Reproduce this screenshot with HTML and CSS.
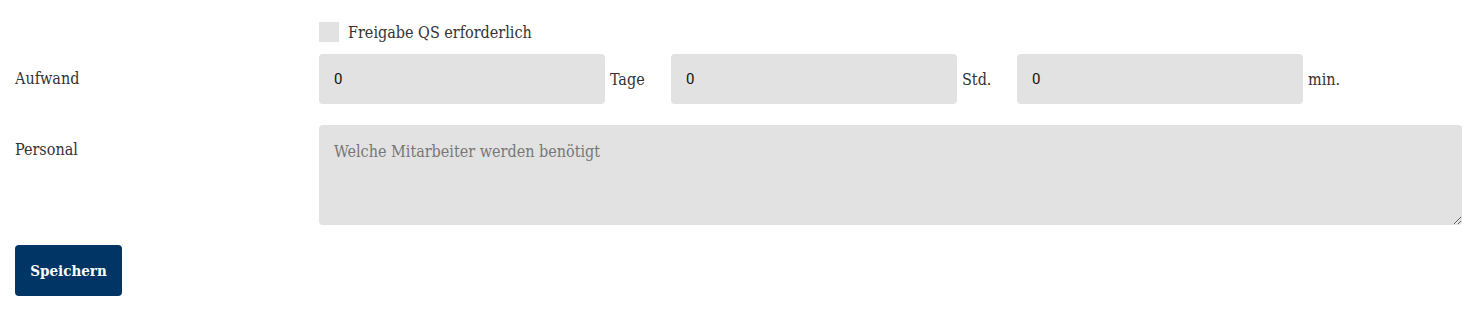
FILE: index.html
```html
<!DOCTYPE html>
<html lang="de">
<head>
<meta charset="utf-8">
<title>Formular</title>
<link rel="stylesheet" href="styles.css">
</head>
<body>
<form class="form">
  <div class="row row-check">
    <div class="spacer"></div>
    <label class="check">
      <span class="box"></span>
      <span class="check-text">Freigabe QS erforderlich</span>
    </label>
  </div>
  <div class="row row-effort">
    <div class="label">Aufwand</div>
    <div class="effort">
      <input class="field" type="text" value="0">
      <span class="unit unit-days">Tage</span>
      <input class="field" type="text" value="0">
      <span class="unit unit-hours">Std.</span>
      <input class="field" type="text" value="0">
      <span class="unit">min.</span>
    </div>
  </div>
  <div class="row row-staff">
    <div class="label">Personal</div>
    <textarea class="area" placeholder="Welche Mitarbeiter werden benötigt"></textarea>
  </div>
  <div class="actions">
    <button type="button" class="btn">Speichern</button>
  </div>
</form>
</body>
</html>
```
FILE: styles.css
```css
html, body {
  margin: 0;
  padding: 0;
  background: #fff;
}
body {
  font-family: "DejaVu Serif Condensed", "DejaVu Serif", "Liberation Serif", serif;
  font-size: 16px;
  color: #333;
}
.form {
  padding: 22px 19px 0 15px;
}
.row {
  display: grid;
  grid-template-columns: 304px 1fr;
}
.row-check {
  height: 20px;
  margin-bottom: 12px;
}
.check {
  display: flex;
  align-items: center;
  gap: 9px;
  height: 20px;
}
.box {
  width: 20px;
  height: 20px;
  background: #e2e2e2;
}
.check-text {
  color: #333;
}
.row-effort {
  margin-bottom: 21px;
}
.label {
  line-height: 50px;
  height: 50px;
}
.effort {
  display: flex;
  align-items: center;
}
.field {
  width: 286px;
  height: 50px;
  box-sizing: border-box;
  border: none;
  border-radius: 4px;
  background: #e2e2e2;
  padding: 0 15px;
  font-family: "Roboto", "Liberation Sans", sans-serif;
  font-size: 15px;
  color: #111;
  outline: none;
}
.unit {
  padding-left: 5px;
  color: #333;
}
.unit-days {
  width: 61px;
}
.unit-hours {
  width: 55px;
}
.row-staff {
  margin-bottom: 20px;
}
.area {
  display: block;
  height: 100px;
  box-sizing: border-box;
  border: none;
  border-radius: 4px;
  background: #e2e2e2;
  padding: 17px 15px;
  font-family: "DejaVu Serif Condensed", "DejaVu Serif", "Liberation Serif", serif;
  font-size: 16px;
  color: #333;
  resize: vertical;
  outline: none;
}
.area::placeholder {
  color: #777;
}
.actions {
  display: flex;
}
.btn {
  width: 107px;
  height: 51px;
  border: none;
  border-radius: 4px;
  background: #003566;
  color: #fff;
  font-family: "DejaVu Serif Condensed", "DejaVu Serif", serif;
  font-weight: bold;
  font-size: 15px;
  cursor: pointer;
}
```
